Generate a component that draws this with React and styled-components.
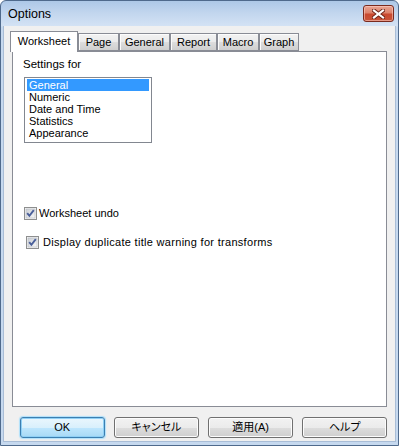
import React from "react";
import styled, { createGlobalStyle } from "styled-components";

const GlobalStyle = createGlobalStyle`
  html, body { margin: 0; padding: 0; }
  body {
    width: 399px; height: 446px; overflow: hidden;
    font-family: "Liberation Sans", Arial, "Noto Sans CJK JP", sans-serif;
    background: #ffffff;
  }
  * { box-sizing: border-box; }
`;

const Window = styled.div`
  width: 399px;
  height: 446px;
  display: flex;
  flex-direction: column;
  border: 1px solid #4f6a8c;
  border-radius: 6px 6px 0 0;
  background: linear-gradient(to bottom, #adc8e7 0px, #c2d6ee 12px, #d3e2f4 25px, #c6d9ef 26px, #c6d9ef 100%);
`;

const TitleBar = styled.div`
  height: 25px;
  display: flex;
  align-items: center;
  padding: 0 4px 0 7px;
  flex-shrink: 0;
`;

const Title = styled.div`
  flex: 1;
  font-size: 12.5px;
  color: #000;
  line-height: 14px;
  padding-top: 1px;
`;

const CloseButton = styled.div`
  align-self: flex-start;
  margin-top: 4px;
  width: 31px;
  height: 17px;
  border: 1px solid #7a2a1e;
  border-radius: 3px;
  background: linear-gradient(to bottom, #e9a594 0%, #dd836c 45%, #c9492f 55%, #c8553a 100%);
  box-shadow: inset 0 0 0 1px rgba(255, 210, 200, 0.55);
  display: flex;
  align-items: center;
  justify-content: center;
`;

const Client = styled.div`
  flex: 1;
  margin: 0 2px 3px 2px;
  background: #f0f0f0;
  display: flex;
  flex-direction: column;
  padding: 5px 8px 0 8px;
  border: 1px solid #a9bdd6;
  border-top: none;
`;

const TabStrip = styled.div`
  display: flex;
  align-items: flex-end;
  height: 20px;
  margin-left: -2px;
`;

const Tab = styled.div`
  width: ${(p) => p.$w}px;
  height: ${(p) => (p.$active ? 21 : 18)}px;
  margin-bottom: ${(p) => (p.$active ? -1 : 0)}px;
  margin-left: ${(p) => p.$ml || 0}px;
  border: 1px solid #898c95;
  border-bottom: ${(p) => (p.$active ? "none" : "1px solid #898c95")};
  background: ${(p) =>
    p.$active ? "#ffffff" : "linear-gradient(to bottom, #f2f2f2 0%, #ebebeb 50%, #dddddd 51%, #cfcfcf 100%)"};
  position: relative;
  z-index: ${(p) => (p.$active ? 2 : 1)};
  font-size: 11px;
  color: #000;
  display: flex;
  align-items: ${(p) => (p.$active ? "flex-start" : "center")};
  padding-top: ${(p) => (p.$active ? 3 : 0)}px;
  justify-content: center;
  line-height: 13px;
  box-shadow: ${(p) => (p.$active ? "none" : "inset 1px 1px 0 #fcfcfc")};
`;

const Panel = styled.div`
  height: 356px;
  background: #ffffff;
  border: 1px solid #898c95;
  padding: 6px 10px 0 10px;
  display: flex;
  flex-direction: column;
  align-items: flex-start;
`;

const Label = styled.div`
  font-size: 11.5px;
  line-height: 13px;
  color: #000;
`;

const ListBox = styled.div`
  margin: 6px 0 0 1px;
  width: 128px;
  height: 66px;
  border: 1px solid #828790;
  padding: 1px;
  background: #fff;
`;

const ListItem = styled.div`
  height: 12px;
  line-height: 12px;
  margin: 0 1px;
  padding-left: 2px;
  font-size: 11px;
  color: ${(p) => (p.$selected ? "#ffffff" : "#000000")};
  background: ${(p) => (p.$selected ? "#3399ff" : "transparent")};
`;

const CheckRow = styled.div`
  display: flex;
  align-items: center;
  margin-top: ${(p) => p.$mt}px;
  margin-left: ${(p) => p.$indent}px;
  gap: ${(p) => p.$gap}px;
  height: 13px;
`;

const CheckText = styled.span`
  font-size: 11px;
  line-height: 13px;
  color: #000;
  letter-spacing: ${(p) => p.$ls || 0}px;
`;

const ButtonRow = styled.div`
  display: flex;
  gap: 9.67px;
  margin-top: 10px;
  padding-left: 8px;
`;

const Button = styled.div`
  width: 85px;
  height: 21px;
  border-radius: 3px;
  border: 1px solid ${(p) => (p.$default ? "#3c7fb1" : "#707070")};
  background: ${(p) =>
    p.$default
      ? "linear-gradient(to bottom, #eaf6fd 0%, #d9f0fc 50%, #bee6fd 51%, #a7d9f5 100%)"
      : "linear-gradient(to bottom, #f2f2f2 0%, #ebebeb 50%, #dddddd 51%, #cfcfcf 100%)"};
  box-shadow: ${(p) =>
    p.$default ? "inset 0 0 0 1px #8fd0f5, 0 0 1px 1px #aee0fb" : "inset 0 0 0 1px #fcfcfc"};
  display: flex;
  align-items: center;
  justify-content: center;
  font-size: 11px;
  font-family: "Liberation Sans", "Noto Sans CJK JP", sans-serif;
  font-feature-settings: "palt";
  color: #000;
  line-height: 13px;
`;

const CloseX = () => (
  <svg width="13" height="10" viewBox="0 0 13 10">
    <path d="M2 1.5 L11 8.5 M11 1.5 L2 8.5" stroke="#6b2216" strokeWidth="4" strokeLinecap="square" />
    <path d="M2 1.5 L11 8.5 M11 1.5 L2 8.5" stroke="#ffffff" strokeWidth="2.2" strokeLinecap="square" />
  </svg>
);

const CheckBox = () => (
  <svg width="13" height="13" viewBox="0 0 13 13">
    <defs>
      <linearGradient id="cbg" x1="0" y1="0" x2="1" y2="1">
        <stop offset="0" stopColor="#cbcfd5" />
        <stop offset="1" stopColor="#f7f7f7" />
      </linearGradient>
    </defs>
    <rect x="0.5" y="0.5" width="12" height="12" fill="#f4f4f4" stroke="#8e8f8f" />
    <rect x="2" y="2" width="9" height="9" fill="url(#cbg)" stroke="#b4b9c0" strokeWidth="0.6" />
    <path d="M3.2 6.2 L5.4 8.8 L9.8 3.2" fill="none" stroke="#4a5f9a" strokeWidth="1.9" />
  </svg>
);

const tabs = [
  { label: "Worksheet", w: 68, active: true },
  { label: "Page", w: 41 },
  { label: "General", w: 51, ml: 0 },
  { label: "Report", w: 47 },
  { label: "Macro", w: 42 },
  { label: "Graph", w: 40 },
];

const items = ["General", "Numeric", "Date and Time", "Statistics", "Appearance"];

export default function App() {
  return (
    <>
      <GlobalStyle />
      <Window>
        <TitleBar>
          <Title>Options</Title>
          <CloseButton>
            <CloseX />
          </CloseButton>
        </TitleBar>
        <Client>
          <TabStrip>
            {tabs.map((t) => (
              <Tab key={t.label} $w={t.w} $active={t.active} $ml={t.ml}>
                {t.label}
              </Tab>
            ))}
          </TabStrip>
          <Panel>
            <Label>Settings for</Label>
            <ListBox>
              {items.map((it, i) => (
                <ListItem key={it} $selected={i === 0}>
                  {it}
                </ListItem>
              ))}
            </ListBox>
            <CheckRow $mt={64} $indent={1} $gap={2}>
              <CheckBox />
              <CheckText>Worksheet undo</CheckText>
            </CheckRow>
            <CheckRow $mt={16} $indent={3} $gap={4}>
              <CheckBox />
              <CheckText $ls={0.3}>Display duplicate title warning for transforms</CheckText>
            </CheckRow>
          </Panel>
          <ButtonRow>
            <Button $default>OK</Button>
            <Button>キャンセル</Button>
            <Button>適用(A)</Button>
            <Button>ヘルプ</Button>
          </ButtonRow>
        </Client>
      </Window>
    </>
  );
}
